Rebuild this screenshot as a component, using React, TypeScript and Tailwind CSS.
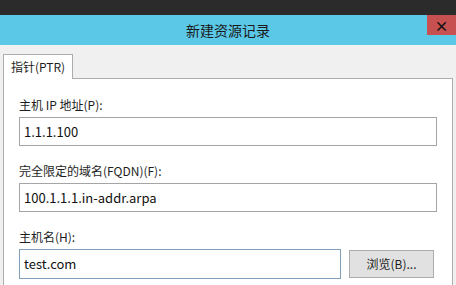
import React from 'react';

const font = { fontFamily: '"Noto Sans CJK SC", "Noto Sans", sans-serif' };

function Field({ label, value, className = '' }: { label: string; value: string; className?: string }) {
  return (
    <div className="flex flex-col">
      <div className="text-[12px] leading-[16px] text-[#1e1e1e] mb-[4px]">{label}</div>
      <div className={`h-[29px] border border-[#a5a5a5] bg-white flex items-center px-[4px] text-[13px] text-[#111] ${className}`}>
        {value}
      </div>
    </div>
  );
}

export default function App() {
  return (
    <div className="w-[456px] h-[285px] overflow-hidden bg-[#f0f0f0] flex flex-col" style={font}>
      <div className="h-[15px] bg-[#2b2b2b] shrink-0" />
      <div className="relative h-[30px] bg-[#5bc8e8] flex items-center justify-center shrink-0">
        <span className="text-[14px] text-[#1a1a1a]">新建资源记录</span>
        <div className="absolute right-0 top-0 w-[29px] h-[20px] bg-[#c75050] flex items-center justify-center text-[14px] font-bold text-[#111]">
          ×
        </div>
      </div>
      <div className="flex flex-col px-[3px] pt-[9px] flex-1">
        <div className="w-[70px] h-[25px] bg-white border border-b-0 border-[#adadad] flex items-center justify-center text-[12px] text-[#1e1e1e] -mb-px relative z-10">
          指针(PTR)
        </div>
        <div className="flex-1 bg-white border border-[#adadad] border-b-0 pl-[15px] pr-[15px] pt-[18px] flex flex-col gap-[17px]">
          <Field label="主机 IP 地址(P):" value="1.1.1.100" />
          <Field label="完全限定的域名(FQDN)(F):" value="100.1.1.1.in-addr.arpa" />
          <div className="flex flex-col">
            <div className="text-[12px] leading-[16px] text-[#1e1e1e] mb-[4px]">主机名(H):</div>
            <div className="flex items-center gap-[8px]">
              <div className="w-[322px] h-[30px] border border-[#7f9db9] bg-white flex items-center px-[4px] text-[13px] text-[#111]">
                test.com
              </div>
              <div className="w-[85px] h-[28px] border border-[#adadad] bg-[#e1e1e1] flex items-center justify-center text-[12px] text-[#1e1e1e]">
                浏览(B)...
              </div>
            </div>
          </div>
        </div>
      </div>
    </div>
  );
}
